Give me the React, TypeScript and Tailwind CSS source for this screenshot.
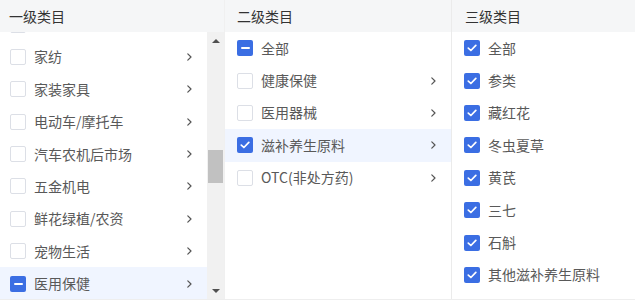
import type { ReactNode } from "react";

type Estado = "vazio" | "marcado" | "parcial";

type Item = {
  nome: string;
  estado: Estado;
  seta?: boolean;
  ativo?: boolean;
};

// a primeira linha fica escondida atras do cabecalho (lista rolada), so' a borda da caixa aparece
const PRIMEIRO: Item[] = [
  { nome: "", estado: "vazio" },
  { nome: "家纺", estado: "vazio", seta: true },
  { nome: "家装家具", estado: "vazio", seta: true },
  { nome: "电动车/摩托车", estado: "vazio", seta: true },
  { nome: "汽车农机后市场", estado: "vazio", seta: true },
  { nome: "五金机电", estado: "vazio", seta: true },
  { nome: "鲜花绿植/农资", estado: "vazio", seta: true },
  { nome: "宠物生活", estado: "vazio", seta: true },
  { nome: "医用保健", estado: "parcial", seta: true, ativo: true },
];

const SEGUNDO: Item[] = [
  { nome: "全部", estado: "parcial" },
  { nome: "健康保健", estado: "vazio", seta: true },
  { nome: "医用器械", estado: "vazio", seta: true },
  { nome: "滋补养生原料", estado: "marcado", seta: true, ativo: true },
  { nome: "OTC(非处方药)", estado: "vazio", seta: true },
];

const TERCEIRO: Item[] = [
  "全部",
  "参类",
  "藏红花",
  "冬虫夏草",
  "黄芪",
  "三七",
  "石斛",
  "其他滋补养生原料",
].map((nome) => ({ nome, estado: "marcado" as Estado }));

function Caixa({ estado }: { estado: Estado }) {
  if (estado === "vazio") {
    return <span className="block h-4 w-4 shrink-0 rounded-[2px] border border-[#dcdfe6] bg-white" />;
  }
  return (
    <span className="flex h-4 w-4 shrink-0 items-center justify-center rounded-[2px] bg-[#3b6ee3]">
      {estado === "parcial" ? (
        <span className="block h-[2px] w-[9px] rounded-[1px] bg-white" />
      ) : (
        <svg width="10" height="8" viewBox="0 0 10 8" fill="none">
          <path d="M1.3 4.1 3.9 6.5 8.8 1.4" stroke="white" strokeWidth="1.7" strokeLinecap="round" strokeLinejoin="round" />
        </svg>
      )}
    </span>
  );
}

function Seta() {
  return (
    <svg width="7" height="10" viewBox="0 0 7 10" fill="none" className="shrink-0">
      <path d="M1.8 1.8 5 5 1.8 8.2" stroke="#555" strokeWidth="1.2" strokeLinecap="round" strokeLinejoin="round" />
    </svg>
  );
}

function Linha({ item, pl, pr }: { item: Item; pl: string; pr: string }) {
  return (
    <div
      className={`flex h-[32.4px] shrink-0 items-center gap-2 ${pl} ${pr} ${item.ativo ? "bg-[#f0f5ff]" : ""}`}
    >
      <Caixa estado={item.estado} />
      <span className="flex-1 truncate text-[14px] text-[#595959]">{item.nome}</span>
      {item.seta && <Seta />}
    </div>
  );
}

function Cabecalho({ children, pl }: { children: ReactNode; pl: string }) {
  return (
    <div className={`flex h-8 shrink-0 items-center bg-[#f5f6f7] text-[14px] text-[#333] ${pl}`}>
      {children}
    </div>
  );
}

function BarraRolagem() {
  return (
    <div className="flex w-[17px] shrink-0 flex-col bg-[#f1f1f1]">
      <div className="flex h-[17px] items-center justify-center">
        <span className="block h-0 w-0 border-x-[4px] border-b-[4px] border-x-transparent border-b-[#505050]" />
      </div>
      <div className="flex-1 px-[1px]">
        <div className="mt-[101px] h-[33px] w-full bg-[#c1c1c1]" />
      </div>
      <div className="flex h-[17px] items-center justify-center">
        <span className="block h-0 w-0 border-x-[4px] border-t-[4px] border-x-transparent border-t-[#505050]" />
      </div>
    </div>
  );
}

export default function App() {
  return (
    <div
      className="flex h-[300px] w-[635px] overflow-hidden border-b border-[#eeeeee] bg-white"
      style={{ fontFamily: '"Noto Sans CJK SC", "Noto Sans", sans-serif' }}
    >
      <div className="flex w-[224px] shrink-0 flex-col">
        <Cabecalho pl="pl-[9px]">一级类目</Cabecalho>
        <div className="flex min-h-0 flex-1">
          <div className="flex min-w-0 flex-1 flex-col overflow-hidden">
            <div className="-mt-[23.7px] flex flex-col">
              {PRIMEIRO.map((item, indice) => (
                <Linha key={indice} item={item} pl="pl-[10px]" pr="pr-[14px]" />
              ))}
            </div>
          </div>
          <BarraRolagem />
        </div>
      </div>

      <div className="flex w-[227px] shrink-0 flex-col border-l border-[#f0f0f0]">
        <Cabecalho pl="pl-3">二级类目</Cabecalho>
        <div className="flex flex-col">
          {SEGUNDO.map((item) => (
            <Linha key={item.nome} item={item} pl="pl-3" pr="pr-[14px]" />
          ))}
        </div>
      </div>

      <div className="flex min-w-0 flex-1 flex-col border-l border-[#ebebeb]">
        <Cabecalho pl="pl-[13px]">三级类目</Cabecalho>
        <div className="flex flex-col">
          {TERCEIRO.map((item) => (
            <Linha key={item.nome} item={item} pl="pl-3" pr="pr-3" />
          ))}
        </div>
      </div>
    </div>
  );
}
